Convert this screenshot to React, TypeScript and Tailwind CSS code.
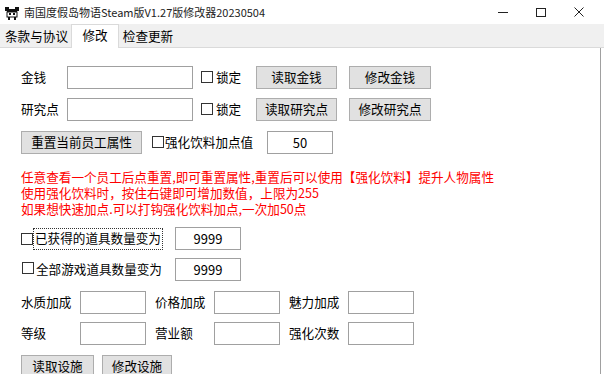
import React from "react";

const font = { fontFamily: '"Noto Sans CJK SC", "Noto Sans", sans-serif' };

function Box() {
  return <span className="inline-block w-[12px] h-[12px] border border-[#333333] bg-white shrink-0" />;
}

function Input({ w, value, className = "" }: { w: string; value?: string; className?: string }) {
  return (
    <div className={`${w} h-[23px] border border-[#a0a0a0] bg-white flex items-center justify-center text-[13px] text-black shrink-0 ${className}`}>
      {value}
    </div>
  );
}

function Btn({ w, children, className = "" }: { w: string; children: React.ReactNode; className?: string }) {
  return (
    <div className={`${w} h-[23px] border border-[#adadad] bg-[#e1e1e1] flex items-center justify-center text-[12.6px] text-black shrink-0 ${className}`}>
      {children}
    </div>
  );
}

export default function App() {
  return (
    <div className="w-[604px] h-[374px] overflow-hidden bg-white text-black flex flex-col" style={font}>
      {/* title bar */}
      <div className="h-[24px] flex items-center shrink-0">
        <svg width="14" height="14" viewBox="0 0 14 14" className="ml-[5px] mt-[2px]">
          <rect x="0" y="1" width="4" height="4" fill="#111" />
          <rect x="10" y="1" width="4" height="4" fill="#111" />
          <rect x="2" y="3" width="10" height="3" fill="#111" />
          <rect x="2" y="6" width="10" height="5" fill="#fff" stroke="#111" strokeWidth="1" />
          <rect x="4" y="7" width="2" height="2" fill="#111" />
          <rect x="8" y="7" width="2" height="2" fill="#111" />
          <rect x="3" y="11" width="2" height="3" fill="#111" />
          <rect x="9" y="11" width="2" height="3" fill="#111" />
        </svg>
        <span className="ml-[5px] text-[11px] text-[#222]">南国度假岛物语Steam版V1.27版修改器20230504</span>
        <div className="ml-auto flex items-center h-full">
          <div className="w-[38px] flex justify-center">
            <span className="block w-[10px] h-px bg-[#222]" />
          </div>
          <div className="w-[38px] flex justify-center">
            <span className="block w-[10px] h-[9px] border border-[#222]" />
          </div>
          <div className="w-[38px] mr-[6px] flex justify-center">
            <svg width="10" height="10" viewBox="0 0 10 10">
              <path d="M0.5 0.5 L9.5 9.5 M9.5 0.5 L0.5 9.5" stroke="#222" strokeWidth="1" />
            </svg>
          </div>
        </div>
      </div>

      {/* tab bar */}
      <div className="h-[24px] bg-[#f0f0f0] border-b border-[#dadada] flex items-end shrink-0 text-[12.6px]">
        <div className="h-[21px] ml-[2px] px-[3px] w-[69px] flex items-center">条款与协议</div>
        <div className="h-[24px] w-[48px] bg-white border border-b-0 border-[#dadada] flex items-center justify-center -mb-px pb-[3px]">修改</div>
        <div className="h-[21px] w-[58px] flex items-center justify-center">检查更新</div>
      </div>

      {/* panel */}
      <div className="flex-1 w-[601px] border-r border-[#a0a0a0] flex flex-col pl-[21px] pt-[18px] text-[12.6px]">
        {/* row 1 */}
        <div className="flex items-center h-[23px]">
          <span className="w-[46px]">金钱</span>
          <Input w="w-[126px]" />
          <div className="w-[63px] pl-[8px] flex items-center gap-[3px]">
            <Box />
            <span>锁定</span>
          </div>
          <Btn w="w-[81px]">读取金钱</Btn>
          <Btn w="w-[82px]" className="ml-[12px]">修改金钱</Btn>
        </div>
        {/* row 2 */}
        <div className="flex items-center h-[23px] mt-[9px]">
          <span className="w-[46px]">研究点</span>
          <Input w="w-[126px]" />
          <div className="w-[63px] pl-[8px] flex items-center gap-[3px]">
            <Box />
            <span>锁定</span>
          </div>
          <Btn w="w-[81px]">读取研究点</Btn>
          <Btn w="w-[82px]" className="ml-[12px]">修改研究点</Btn>
        </div>
        {/* row 3 */}
        <div className="flex items-center h-[23px] mt-[10px]">
          <Btn w="w-[121px]">重置当前员工属性</Btn>
          <div className="w-[125px] pl-[10px] flex items-center gap-[1px]">
            <Box />
            <span>强化饮料加点值</span>
          </div>
          <Input w="w-[66px]" value="50" />
        </div>
        {/* red text */}
        <div className="mt-[15px] text-[#ff0000] leading-[16px]">
          <div>任意查看一个员工后点重置,即可重置属性,重置后可以使用【强化饮料】提升人物属性</div>
          <div>使用强化饮料时，按住右键即可增加数值，上限为255</div>
          <div>如果想快速加点.可以打钩强化饮料加点,一次加50点</div>
        </div>
        {/* row A */}
        <div className="flex items-center h-[23px] mt-[10px]">
          <Box />
          <span className="h-[22px] px-[1px] border border-dotted border-[#333] flex items-center">已获得的道具数量变为</span>
          <Input w="w-[66px]" value="9999" className="ml-[12px]" />
        </div>
        {/* row B */}
        <div className="flex items-center h-[23px] mt-[8px]">
          <span className="ml-[1px]"><Box /></span>
          <span className="ml-[2px] w-[139px]">全部游戏道具数量变为</span>
          <Input w="w-[66px]" value="9999" />
        </div>
        {/* grid rows */}
        <div className="grid grid-cols-[59px_66px_9px_59px_66px_9px_59px_66px] items-center mt-[10px] gap-y-[8px]">
          <span>水质加成</span>
          <Input w="w-[66px]" />
          <span />
          <span>价格加成</span>
          <Input w="w-[66px]" />
          <span />
          <span>魅力加成</span>
          <Input w="w-[66px]" />
          <span>等级</span>
          <Input w="w-[66px]" />
          <span />
          <span>营业额</span>
          <Input w="w-[66px]" />
          <span />
          <span>强化次数</span>
          <Input w="w-[66px]" />
        </div>
        {/* buttons */}
        <div className="flex items-center mt-[10px]">
          <Btn w="w-[73px]">读取设施</Btn>
          <Btn w="w-[70px]" className="ml-[8px]">修改设施</Btn>
        </div>
      </div>
    </div>
  );
}
